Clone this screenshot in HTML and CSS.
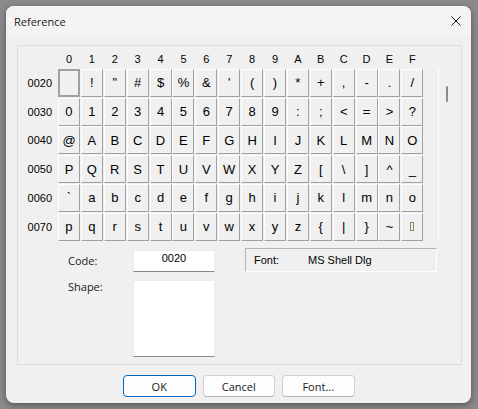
FILE: index.html
```html
<!DOCTYPE html>
<html lang="en">
<head>
    <meta charset="UTF-8">
    <title>Reference</title>
    <link rel="stylesheet" href="styles.css">
</head>
<body>

<div class="window">
    <div class="titlebar">
        <span class="title">Reference</span>
        <svg class="close" width="10" height="10" viewBox="0 0 10 10">
            <path d="M0.5 0.5 L9.5 9.5 M9.5 0.5 L0.5 9.5" stroke="#1a1a1a" stroke-width="1" fill="none"/>
        </svg>
    </div>

    <div class="groupbox">
        <div class="chart-area">
            <div class="chart">
                <!-- column headers -->
                <span></span>
                <span class="col-head">0</span><span class="col-head">1</span><span class="col-head">2</span><span class="col-head">3</span>
                <span class="col-head">4</span><span class="col-head">5</span><span class="col-head">6</span><span class="col-head">7</span>
                <span class="col-head">8</span><span class="col-head">9</span><span class="col-head">A</span><span class="col-head">B</span>
                <span class="col-head">C</span><span class="col-head">D</span><span class="col-head">E</span><span class="col-head">F</span>

                <span class="row-head">0020</span>
                <span class="cell selected"></span><span class="cell">!</span><span class="cell">&quot;</span><span class="cell">#</span>
                <span class="cell">$</span><span class="cell">%</span><span class="cell">&amp;</span><span class="cell">'</span>
                <span class="cell">(</span><span class="cell">)</span><span class="cell">*</span><span class="cell">+</span>
                <span class="cell">,</span><span class="cell">-</span><span class="cell">.</span><span class="cell">/</span>

                <span class="row-head">0030</span>
                <span class="cell">0</span><span class="cell">1</span><span class="cell">2</span><span class="cell">3</span>
                <span class="cell">4</span><span class="cell">5</span><span class="cell">6</span><span class="cell">7</span>
                <span class="cell">8</span><span class="cell">9</span><span class="cell">:</span><span class="cell">;</span>
                <span class="cell">&lt;</span><span class="cell">=</span><span class="cell">&gt;</span><span class="cell">?</span>

                <span class="row-head">0040</span>
                <span class="cell">@</span><span class="cell">A</span><span class="cell">B</span><span class="cell">C</span>
                <span class="cell">D</span><span class="cell">E</span><span class="cell">F</span><span class="cell">G</span>
                <span class="cell">H</span><span class="cell">I</span><span class="cell">J</span><span class="cell">K</span>
                <span class="cell">L</span><span class="cell">M</span><span class="cell">N</span><span class="cell">O</span>

                <span class="row-head">0050</span>
                <span class="cell">P</span><span class="cell">Q</span><span class="cell">R</span><span class="cell">S</span>
                <span class="cell">T</span><span class="cell">U</span><span class="cell">V</span><span class="cell">W</span>
                <span class="cell">X</span><span class="cell">Y</span><span class="cell">Z</span><span class="cell">[</span>
                <span class="cell">\</span><span class="cell">]</span><span class="cell">^</span><span class="cell">_</span>

                <span class="row-head">0060</span>
                <span class="cell">`</span><span class="cell">a</span><span class="cell">b</span><span class="cell">c</span>
                <span class="cell">d</span><span class="cell">e</span><span class="cell">f</span><span class="cell">g</span>
                <span class="cell">h</span><span class="cell">i</span><span class="cell">j</span><span class="cell">k</span>
                <span class="cell">l</span><span class="cell">m</span><span class="cell">n</span><span class="cell">o</span>

                <span class="row-head">0070</span>
                <span class="cell">p</span><span class="cell">q</span><span class="cell">r</span><span class="cell">s</span>
                <span class="cell">t</span><span class="cell">u</span><span class="cell">v</span><span class="cell">w</span>
                <span class="cell">x</span><span class="cell">y</span><span class="cell">z</span><span class="cell">{</span>
                <span class="cell">|</span><span class="cell">}</span><span class="cell">~</span><span class="cell"><span class="notdef"></span></span>
            </div>

            <div class="scrollbar">
                <div class="thumb"></div>
            </div>
        </div>

        <div class="details">
            <div class="fields">
                <span class="field-label">Code:</span>
                <div class="code-box">0020</div>
                <span class="field-label shape-label">Shape:</span>
                <div class="shape-box"></div>
            </div>
            <div class="font-panel">
                <span class="font-label">Font:</span>
                <span>MS Shell Dlg</span>
            </div>
        </div>
    </div>

    <div class="buttons">
        <button class="btn default">OK</button>
        <button class="btn">Cancel</button>
        <button class="btn">Font...</button>
    </div>
</div>

</body>
</html>
```

FILE: styles.css
```css
body {
    margin: 0;
    padding: 6px;
    background-color: #8a8a8a;
    font-family: "Liberation Sans", Arial, sans-serif;
    color: #000;
}

.window {
    width: 465px;
    height: 397px;
    background-color: #f0f0f0;
    border-radius: 8px;
    overflow: hidden;
    box-shadow: 0 2px 6px rgba(0, 0, 0, 0.4);
}

/* title bar */
.titlebar {
    height: 30px;
    box-sizing: border-box;
    display: flex;
    align-items: center;
    justify-content: space-between;
    padding: 0 10px 0 8px;
    background-color: #f3f3f3;
}

.title {
    font-family: "Open Sans", sans-serif;
    font-size: 11px;
    color: #1a1a1a;
}

/* group box around the chart */
.groupbox {
    margin: 9px 9px 0 11px;
    height: 320px;
    box-sizing: border-box;
    border: 1px solid #dcdcdc;
    padding-top: 5px;
}

.chart-area {
    display: flex;
    align-items: flex-start;
}

.chart {
    display: grid;
    grid-template-columns: 39.1px repeat(16, 22px);
    grid-template-rows: 17px repeat(6, 28px);
    column-gap: 0.9px;
    row-gap: 0.8px;
}

.col-head {
    font-size: 11px;
    line-height: 17px;
    text-align: center;
}

.row-head {
    font-size: 11px;
    line-height: 28px;
    text-align: right;
    padding-right: 5px;
}

.cell {
    box-sizing: border-box;
    display: flex;
    align-items: center;
    justify-content: center;
    border: 1px solid;
    border-color: #fff #a0a0a0 #a0a0a0 #fff;
    background-color: #f0f0f0;
    font-size: 13px;
}

.cell.selected {
    border: 2px solid #a0a0a0;
}

.notdef {
    width: 2px;
    height: 7px;
    border: 1px solid #8a8a5a;
}

.scrollbar {
    margin: 17.8px 0 0 14.5px;
    width: 17px;
    height: 172px;
    border-left: 1px solid #fff;
}

.thumb {
    margin: 17px 0 0 7px;
    width: 2px;
    height: 16px;
    border-radius: 1px;
    background-color: #8a8a8a;
}

/* code / shape / font row */
.details {
    display: flex;
    align-items: flex-start;
    margin-top: 7px;
    padding-left: 50px;
}

.fields {
    display: grid;
    grid-template-columns: 65px 82px;
    grid-template-rows: 22px 77px;
    row-gap: 8px;
    padding-top: 2px;
}

.field-label {
    font-family: "Open Sans", sans-serif;
    font-size: 11px;
    line-height: 22px;
    color: #1a1a1a;
}

.field-label.shape-label {
    line-height: 14px;
}

.code-box {
    box-sizing: border-box;
    background-color: #fff;
    border: 1px solid #ececec;
    border-bottom-color: #8a8a8a;
    font-size: 11px;
    line-height: 15px;
    text-align: center;
}

.shape-box {
    box-sizing: border-box;
    background-color: #fff;
    border: 1px solid #ececec;
    border-bottom-color: #8a8a8a;
}

.font-panel {
    margin-left: 30px;
    width: 192px;
    height: 24px;
    box-sizing: border-box;
    border: 1px solid;
    border-color: #b4b4b4 #fff #fff #b4b4b4;
    padding-left: 8px;
    font-size: 11px;
    line-height: 22px;
    display: flex;
}

.font-label {
    width: 54px;
}

/* dialog buttons */
.buttons {
    display: flex;
    gap: 7px;
    margin-top: 10px;
    padding-left: 117px;
}

.btn {
    width: 72.5px;
    height: 22px;
    box-sizing: border-box;
    padding: 0;
    border: 1px solid #d0d0d0;
    border-bottom-color: #b5b5b5;
    border-radius: 4px;
    background-color: #fdfdfd;
    font-family: "Open Sans", sans-serif;
    font-size: 11px;
    color: #1a1a1a;
}

.btn.default {
    border-color: #0067c0;
}
```
